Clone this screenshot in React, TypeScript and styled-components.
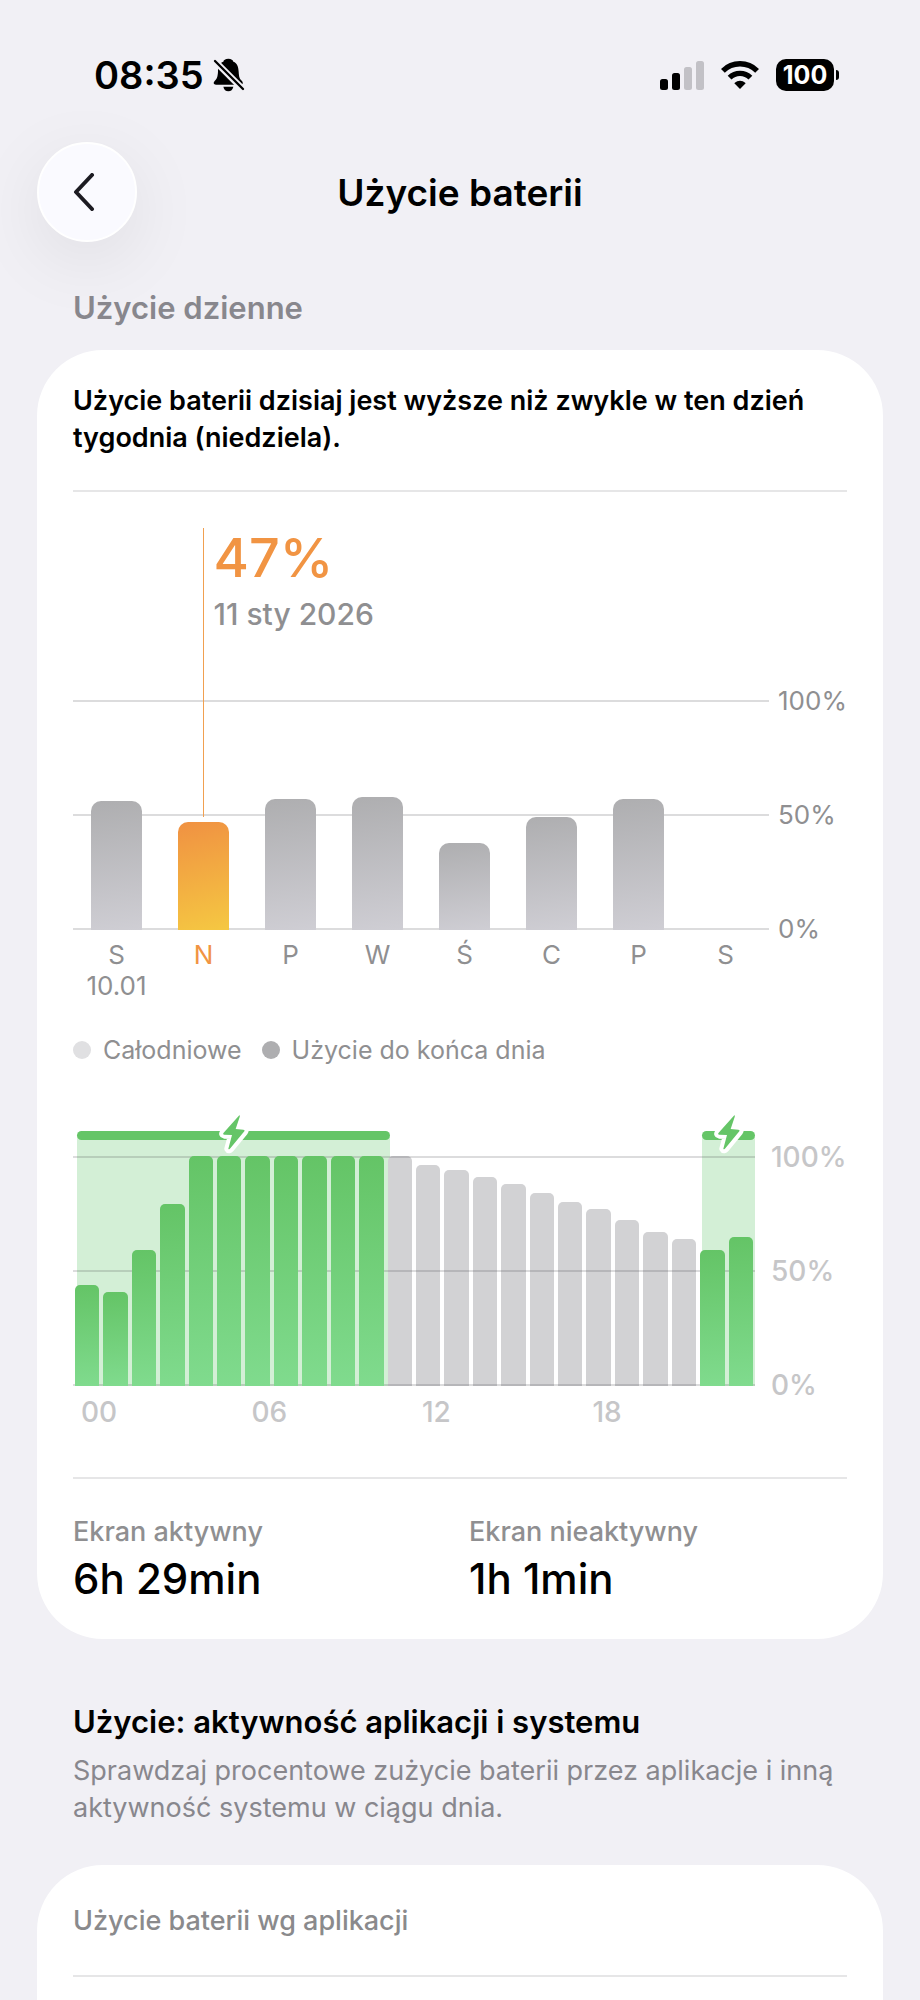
import React from "react";
import styled, { createGlobalStyle } from "styled-components";

const GlobalStyle = createGlobalStyle`
  *, *::before, *::after { box-sizing: border-box; }
  body {
    margin: 0;
    background: #f1f0f5;
    color: #000;
    font-family: Inter, "Liberation Sans", sans-serif;
  }
  h1, h2, h3, p, ul, dl, dd, figure { margin: 0; padding: 0; }
  ul { list-style: none; }
`;

/* ---------- data ---------- */

type Day = { label: string; value: number; date?: string; selected?: boolean };

const days: Day[] = [
  { label: "S", value: 56, date: "10.01" },
  { label: "N", value: 47, selected: true },
  { label: "P", value: 57 },
  { label: "W", value: 58 },
  { label: "Ś", value: 38 },
  { label: "C", value: 49 },
  { label: "P", value: 57 },
  { label: "S", value: 0 },
];

const hourLevels = [
  44, 41, 59, 79, 100, 100, 100, 100, 100, 100, 100, 100,
  96, 94, 91, 88, 84, 80, 77, 72, 67, 64, 59, 65,
];
const hourLabels = ["00", "06", "12", "18"];

/* Hours of the day during which the phone was plugged in. */
const chargingSpans = [
  { from: 0.15, to: 11.15 },
  { from: 22.15, to: 24 },
];
const isCharging = (hour: number) => hour < 11 || hour >= 22;

const percentTicks = ["100%", "50%", "0%"];

/* ---------- page ---------- */

const Page = styled.main`
  display: flex;
  flex-direction: column;
  min-height: 100vh;
  padding: 50px 37px 0;
`;

const StatusBar = styled.div`
  display: flex;
  align-items: center;
  justify-content: space-between;
  height: 50px;
  padding: 0 44px 0 57px;
`;

const StatusGroup = styled.div<{ $gap: number }>`
  display: flex;
  align-items: center;
  gap: ${(p) => p.$gap}px;
`;

const Clock = styled.time`
  font-size: 38px;
  font-weight: 600;
  line-height: 50px;
`;

const Battery = styled.span`
  display: flex;
  align-items: center;
  gap: 2px;
  &::after {
    content: "";
    width: 3px;
    height: 10px;
    border-radius: 0 4px 4px 0;
    background: #000;
  }
`;

const BatteryBody = styled.span`
  width: 58px;
  height: 32px;
  border-radius: 10px;
  background: #000;
  color: #fff;
  font-size: 25px;
  font-weight: 700;
  line-height: 32px;
  text-align: center;
`;

const NavBar = styled.header`
  display: grid;
  grid-template-columns: 100px 1fr 100px;
  align-items: center;
  margin-top: 42px;
`;

const BackButton = styled.button`
  display: grid;
  place-items: center;
  width: 100px;
  height: 100px;
  padding: 0 6px 0 0;
  border: 2px solid #fff;
  border-radius: 50%;
  background: #fafaff;
  box-shadow: 0 18px 72px rgba(0, 0, 0, 0.08);
`;

const NavTitle = styled.h1`
  padding-top: 2px;
  font-size: 37px;
  font-weight: 600;
  line-height: 48px;
  text-align: center;
`;

const SectionLabel = styled.h2`
  margin: 46px 36px 22px;
  color: #88878d;
  font-size: 31px;
  font-weight: 600;
  line-height: 40px;
`;

const Card = styled.section<{ $open?: boolean }>`
  flex: ${(p) => (p.$open ? "1 0 auto" : "none")};
  padding: 32px 36px;
  border-radius: ${(p) => (p.$open ? "66px 66px 0 0" : "66px")};
  background: #fff;
`;

const Note = styled.p`
  font-size: 27px;
  font-weight: 600;
  line-height: 37px;
`;

const Divider = styled.hr<{ $above: number }>`
  height: 2px;
  margin: ${(p) => p.$above}px 0 0;
  border: 0;
  background: #e6e6e7;
`;

/* ---------- chart parts shared by both charts ---------- */

const Chart = styled.div<{ $axis: number; $above: number }>`
  display: grid;
  grid-template-columns: 1fr ${(p) => p.$axis}px;
  margin-top: ${(p) => p.$above}px;
`;

const Gridlines = styled.div`
  z-index: 2;
  display: flex;
  flex-direction: column;
  justify-content: space-between;
  grid-column: 1 / -1;
  grid-row: 2;
  pointer-events: none;
  & > i { height: 2px; background: rgba(40, 40, 45, 0.16); }
`;

const Axis = styled.ul<{ $large?: boolean }>`
  display: flex;
  flex-direction: column;
  justify-content: space-between;
  align-self: end;
  height: 258px;
  margin-bottom: -14px;
  padding-left: ${(p) => (p.$large ? 16 : 9)}px;
  color: ${(p) => (p.$large ? "#c6c6c8" : "#8f8f91")};
  font-size: ${(p) => (p.$large ? 28 : 26)}px;
  font-weight: ${(p) => (p.$large ? 500 : 400)};
  line-height: 30px;
`;

/* ---------- weekly chart ---------- */

const WeekPlot = styled.div`
  display: grid;
  grid-template-columns: repeat(16, 1fr);
  grid-template-rows: 172px 230px;
`;

const Callout = styled.div`
  grid-column: 4 / -1;
  grid-row: 1;
  padding-left: 10px;
`;

const CalloutValue = styled.p`
  color: #f19443;
  font-size: 54px;
  font-weight: 500;
  line-height: 60px;
`;

const CalloutDate = styled.p`
  margin-top: 6px;
  color: #8f8f91;
  font-size: 30px;
  font-weight: 500;
  line-height: 40px;
`;

const CalloutLine = styled.div`
  z-index: 3;
  grid-column: 2 / 4;
  grid-row: 1 / 3;
  margin-bottom: 113px;
  border-right: 1px solid #f1a050;
`;

const DayBar = styled.div<{ $selected?: boolean }>`
  z-index: 3;
  grid-column-end: span 2;
  grid-row: 2;
  place-self: end center;
  width: 58%;
  border-radius: 10px 10px 0 0;
  background: ${(p) =>
    p.$selected
      ? "linear-gradient(165deg, #f09142, #f5c842)"
      : "linear-gradient(172deg, #aeaeb0, #cfced4)"};
`;

const DayLabels = styled.ul`
  display: grid;
  grid-template-columns: repeat(8, 1fr);
  margin-top: 9px;
`;

const DayLabel = styled.li<{ $selected?: boolean }>`
  color: ${(p) => (p.$selected ? "#f19443" : "#8f8f91")};
  font-size: 26px;
  line-height: 31px;
  text-align: center;
  white-space: pre-line;
`;

const Legend = styled.ul`
  display: flex;
  gap: 20px;
  margin-top: 34px;
`;

const LegendItem = styled.li<{ $color: string }>`
  display: flex;
  align-items: center;
  gap: 12px;
  color: #8f8f91;
  font-size: 25px;
  line-height: 30px;
  &::before {
    content: "";
    width: 18px;
    height: 18px;
    border-radius: 50%;
    background: ${(p) => p.$color};
  }
`;

/* ---------- hourly chart ---------- */

const HourPlot = styled.div`
  display: grid;
  grid-template-columns: repeat(24, 1fr);
  grid-template-rows: 25px 230px;
`;

const ChargeBand = styled.div`
  display: grid;
  grid-template-rows: 9px 1fr;
  grid-column: 1 / -1;
  grid-row: 1 / 3;
`;

const ChargeCap = styled.div`
  z-index: 4;
  display: grid;
  place-content: center;
  border-radius: 5px;
  background: #65c567;
`;

const ChargeShade = styled.div`
  margin-top: -3px;
  background: #d3efd6;
`;

const HourBar = styled.div<{ $charging: boolean }>`
  z-index: ${(p) => (p.$charging ? 3 : 1)};
  grid-row: 2;
  align-self: end;
  margin: 0 2px;
  border-radius: 5px 5px 0 0;
  background: ${(p) =>
    p.$charging ? "linear-gradient(176deg, #64c466, #80db8e)" : "#d2d2d4"};
`;

const HourLabels = styled.ul`
  display: grid;
  grid-template-columns: repeat(4, 1fr);
  margin-top: 11px;
  color: #c6c6c8;
  font-size: 28px;
  font-weight: 500;
  line-height: 30px;
  & > li { padding-left: 8px; }
`;

/* ---------- totals and app section ---------- */

const Totals = styled.dl`
  display: grid;
  grid-template-columns: 1fr 1fr;
  column-gap: 18px;
  margin-top: 35px;
`;

const TotalLabel = styled.dt`
  color: #8f8f91;
  font-size: 27px;
  font-weight: 500;
  line-height: 36px;
`;

const TotalValue = styled.dd`
  font-size: 42px;
  font-weight: 500;
  line-height: 57px;
`;

const AppsIntro = styled.div`
  margin: 63px 36px 39px;
`;

const AppsHeading = styled.h2`
  font-size: 31px;
  font-weight: 600;
  line-height: 40px;
`;

const AppsText = styled.p`
  margin-top: 10px;
  color: #88878d;
  font-size: 27px;
  line-height: 37px;
`;

const CardTitle = styled.h3`
  color: #8a8a8c;
  font-size: 27px;
  font-weight: 500;
  line-height: 48px;
`;

/* ---------- icons ---------- */

const BellSlash = () => (
  <svg width="32" height="34" viewBox="636 84 96 102" aria-hidden="true">
    <path d="M682 86C673 86 668 90 667 95C655 99 651 110 651 125C650 142 647 147 641 153C636 158 638 164 645 164L719 164C726 164 727 158 723 153C716 147 714 142 713 125C712 110 709 99 697 95C696 90 691 86 682 86Z" />
    <path d="M667 170h30C695 179 690 184 682 184C674 184 669 179 667 170Z" />
    <path d="M638 90L730 182" stroke="#f1f0f5" strokeWidth="19" />
    <path d="M642 93L726 177" stroke="#000" strokeWidth="7" strokeLinecap="round" />
  </svg>
);

const Signal = () => (
  <svg width="44" height="29" viewBox="0 0 44 29" aria-hidden="true">
    <rect x="0" y="18" width="8" height="11" rx="2.5" />
    <rect x="12" y="12" width="8" height="17" rx="2.5" />
    <rect x="24" y="6" width="8" height="23" rx="2.5" fill="#c2c1c6" />
    <rect x="36" y="0" width="8" height="29" rx="2.5" fill="#c2c1c6" />
  </svg>
);

const Wifi = () => (
  <svg width="38" height="28" viewBox="0 0 38 28" aria-hidden="true">
    <g fill="none" stroke="#000" strokeWidth="5.4">
      <path d="M1.9 9.9A24.2 24.2 0 0 1 36.1 9.9" />
      <path d="M8.6 16.7A14.7 14.7 0 0 1 29.4 16.7" />
    </g>
    <path d="M19 28L13.6 22.5Q13.4 22.2 13.8 21.8A7.7 7.7 0 0 1 24.2 21.8Q24.6 22.2 24.4 22.5Z" />
  </svg>
);

const Chevron = () => (
  <svg width="22" height="38" viewBox="0 0 22 38" aria-hidden="true">
    <path
      d="M19 2L3 19L19 36"
      fill="none"
      stroke="#1c1b22"
      strokeWidth="4"
      strokeLinecap="round"
      strokeLinejoin="round"
    />
  </svg>
);

const bolt =
  "M537 45Q540 46 538 50L526 86L549 88Q555 89 552 93L510 144Q506 149 504 145L515 104L492 103Q486 102 490 97Z";

const Bolt = () => (
  <svg width="34" height="44" viewBox="470 41 102 132" aria-hidden="true">
    <path d={bolt} fill="#fff" stroke="#fff" strokeWidth="24" strokeLinejoin="round" />
    <path d={bolt} fill="#65c567" />
  </svg>
);

/* ---------- screen ---------- */

const Ticks = ({ large }: { large?: boolean }) => (
  <Axis $large={large}>
    {percentTicks.map((tick) => (
      <li key={tick}>{tick}</li>
    ))}
  </Axis>
);

const Lines = () => (
  <Gridlines>
    <i />
    <i />
    <i />
  </Gridlines>
);

export default function App() {
  return (
    <>
      <GlobalStyle />
      <Page>
        <StatusBar>
          <StatusGroup $gap={9}>
            <Clock>08:35</Clock>
            <BellSlash />
          </StatusGroup>
          <StatusGroup $gap={17}>
            <Signal />
            <Wifi />
            <Battery>
              <BatteryBody>100</BatteryBody>
            </Battery>
          </StatusGroup>
        </StatusBar>

        <NavBar>
          <BackButton type="button" aria-label="Wstecz">
            <Chevron />
          </BackButton>
          <NavTitle>Użycie baterii</NavTitle>
        </NavBar>

        <SectionLabel>Użycie dzienne</SectionLabel>

        <Card>
          <Note>Użycie baterii dzisiaj jest wyższe niż zwykle w ten dzień tygodnia (niedziela).</Note>
          <Divider $above={34} />

          <figure>
            <Chart $axis={78} $above={36}>
              <WeekPlot>
                <Callout>
                  <CalloutValue>47%</CalloutValue>
                  <CalloutDate>11 sty 2026</CalloutDate>
                </Callout>
                <Lines />
                {days.map((day, i) => (
                  <DayBar
                    key={i}
                    $selected={day.selected}
                    style={{ height: `${day.value}%`, gridColumnStart: i * 2 + 1 }}
                  />
                ))}
                <CalloutLine />
              </WeekPlot>
              <Ticks />
              <DayLabels>
                {days.map((day, i) => (
                  <DayLabel key={i} $selected={day.selected}>
                    {day.date ? `${day.label}\n${day.date}` : day.label}
                  </DayLabel>
                ))}
              </DayLabels>
            </Chart>
            <Legend>
              <LegendItem $color="#e0e0e2">Całodniowe</LegendItem>
              <LegendItem $color="#aeaeb0">Użycie do końca dnia</LegendItem>
            </Legend>
          </figure>

          <figure>
            <Chart $axis={92} $above={66}>
              <HourPlot>
                {chargingSpans.map(({ from, to }) => (
                  <ChargeBand
                    key={from}
                    style={{
                      marginLeft: `${(from / 24) * 100}%`,
                      width: `${((to - from) / 24) * 100}%`,
                    }}
                  >
                    <ChargeCap>
                      <Bolt />
                    </ChargeCap>
                    <ChargeShade />
                  </ChargeBand>
                ))}
                <Lines />
                {hourLevels.map((level, hour) => (
                  <HourBar
                    key={hour}
                    $charging={isCharging(hour)}
                    style={{ height: `${level}%`, gridColumnStart: hour + 1 }}
                  />
                ))}
              </HourPlot>
              <Ticks large />
              <HourLabels>
                {hourLabels.map((label) => (
                  <li key={label}>{label}</li>
                ))}
              </HourLabels>
            </Chart>
          </figure>

          <Divider $above={50} />
          <Totals>
            <div>
              <TotalLabel>Ekran aktywny</TotalLabel>
              <TotalValue>6h 29min</TotalValue>
            </div>
            <div>
              <TotalLabel>Ekran nieaktywny</TotalLabel>
              <TotalValue>1h 1min</TotalValue>
            </div>
          </Totals>
        </Card>

        <AppsIntro>
          <AppsHeading>Użycie: aktywność aplikacji i systemu</AppsHeading>
          <AppsText>
            Sprawdzaj procentowe zużycie baterii przez aplikacje i inną aktywność systemu w ciągu dnia.
          </AppsText>
        </AppsIntro>

        <Card $open>
          <CardTitle>Użycie baterii wg aplikacji</CardTitle>
          <Divider $above={30} />
        </Card>
      </Page>
    </>
  );
}
